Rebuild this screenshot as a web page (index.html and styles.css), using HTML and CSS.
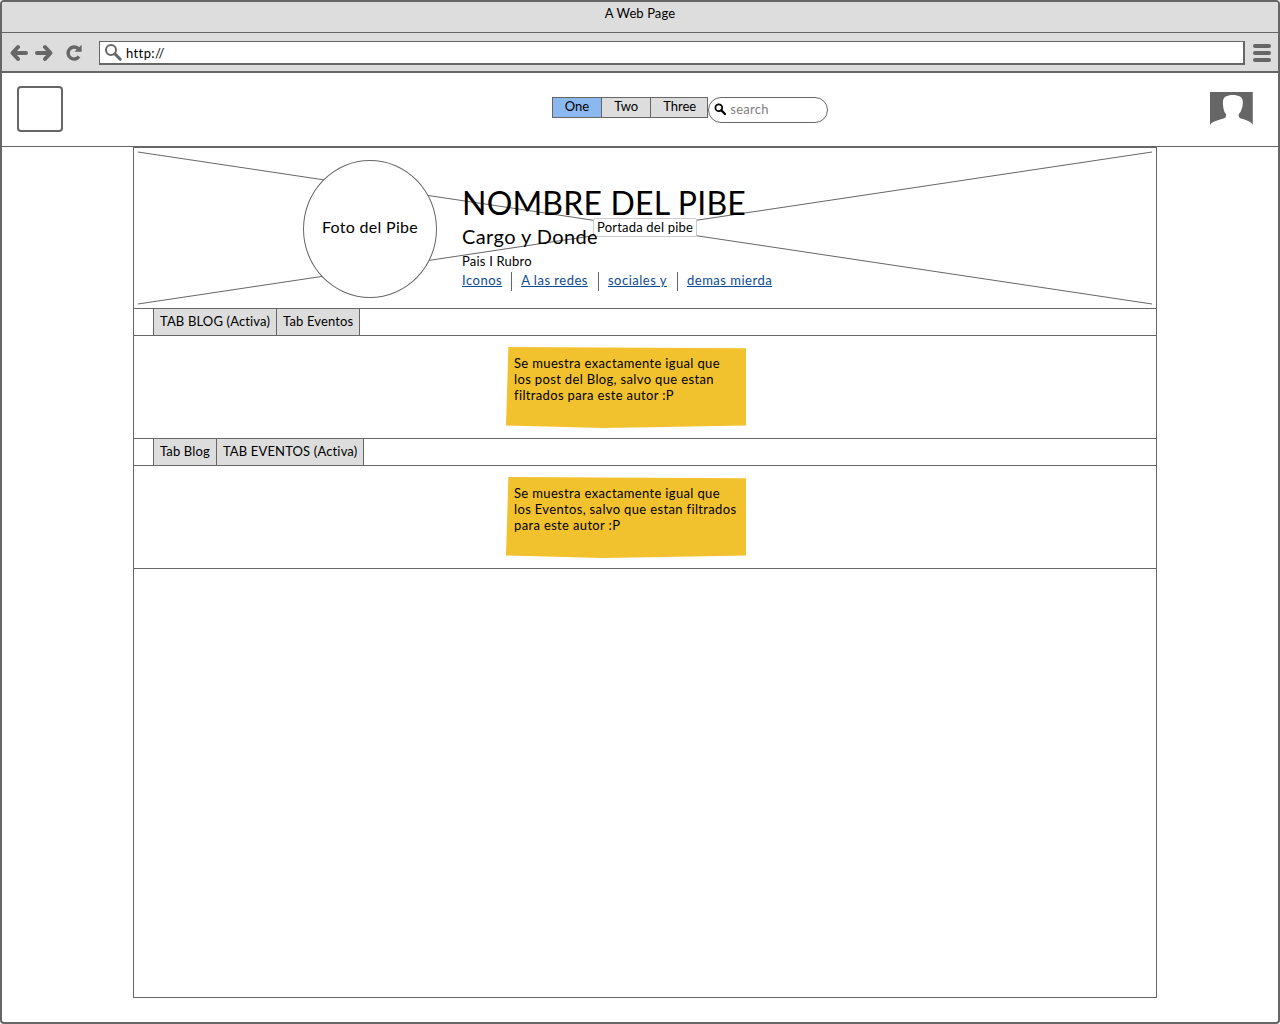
FILE: index.html
```html
<!DOCTYPE html>
<html lang="es">
<head>
    <meta charset="UTF-8">
    <meta name="viewport" content="width=device-width, initial-scale=1.0">
    <title>A Web Page</title>
    <link rel="stylesheet" href="styles.css">
</head>
<body>
    <div class="window">
        <div class="title-bar">A Web Page</div>
        <div class="tool-bar">
            <svg class="tool-icon" width="18" height="18" viewBox="0 0 18 18"><path d="M8 3 L2.500 9 L8 15 M3 9 H16" fill="none" stroke="#666" stroke-width="4" stroke-linejoin="round" stroke-linecap="round"/></svg>
            <svg class="tool-icon forward" width="18" height="18" viewBox="0 0 18 18"><path d="M10 3 L15.500 9 L10 15 M15 9 H2" fill="none" stroke="#666" stroke-width="4" stroke-linejoin="round" stroke-linecap="round"/></svg>
            <svg class="tool-icon reload" width="18" height="18" viewBox="0 0 18 18"><path d="M14 12.500 A6 6 0 1 1 13.200 4.600" fill="none" stroke="#666" stroke-width="3.400"/><path d="M9.500 7.800 H16.600 V0.800 Z" fill="#666"/></svg>
            <div class="address">
                <svg width="18" height="18" viewBox="0 0 18 18"><circle cx="7" cy="7" r="5" fill="none" stroke="#666" stroke-width="2"/><path d="M10.800 10.800 L16.200 16.200" stroke="#666" stroke-width="3" stroke-linecap="round"/></svg>
                <span>http://</span>
            </div>
            <div class="burger"><i></i><i></i><i></i></div>
        </div>
        <div class="site-header">
            <div class="logo"></div>
            <div class="site-nav">
                <div class="button-bar">
                    <span class="on">One</span>
                    <span>Two</span>
                    <span>Three</span>
                </div>
                <div class="search">
                    <svg width="12" height="12" viewBox="0 0 12 12"><circle cx="4.800" cy="4.800" r="3.400" fill="none" stroke="#000" stroke-width="1.700"/><path d="M7.400 7.400 L11 11" stroke="#000" stroke-width="2.200" stroke-linecap="round"/></svg>
                    <span>search</span>
                </div>
            </div>
            <svg class="avatar" width="43" height="34" viewBox="0 0 43 34"><path d="M0 0 H43 V33 C42 30 37 28 31 26.500 C29 26 28.500 24 29 22 C31.500 20 33 15 33 10 C33 5 29 3 23 3 C17 3 13 5 13 10 C13 15 14 20 16 22 C16.500 24 16 26 14 26.500 C8 28 1 30 0 33 Z" fill="#666"/></svg>
        </div>
        <div class="page">
            <div class="cover">
                <svg class="cover-lines" width="1022" height="160" viewBox="0 0 1022 160"><path d="M4 4 L1018 156 M4 156 L1018 4" stroke="#666" stroke-width="1" fill="none"/></svg>
                <span class="cover-label">Portada del pibe</span>
                <div class="photo">Foto del Pibe</div>
                <div class="profile">
                    <h1>NOMBRE DEL PIBE</h1>
                    <h2>Cargo y Donde</h2>
                    <p>Pais I Rubro</p>
                    <div class="links">
                        <a href="#">Iconos</a>
                        <a href="#">A las redes</a>
                        <a href="#">sociales y</a>
                        <a href="#">demas mierda</a>
                    </div>
                </div>
            </div>
            <div class="tabs">
                <span>TAB BLOG (Activa)</span>
                <span>Tab Eventos</span>
            </div>
            <div class="tab-body">
                <div class="note">Se muestra exactamente igual que<br>los post del Blog, salvo que estan<br>filtrados para este autor :P</div>
            </div>
            <div class="tabs">
                <span>Tab Blog</span>
                <span>TAB EVENTOS (Activa)</span>
            </div>
            <div class="tab-body last">
                <div class="note">Se muestra exactamente igual que<br>los Eventos, salvo que estan filtrados<br>para este autor :P</div>
            </div>
        </div>
    </div>
</body>
</html>
```
FILE: styles.css
```css
* {
    box-sizing: border-box;
}

body {
    margin: 0;
    font-family: Lato, "Open Sans", sans-serif;
    font-size: 13px;
    color: #000;
    background-color: #fff;
}

.window {
    height: 1024px;
    border: 2px solid #666;
    border-radius: 4px;
    display: flex;
    flex-direction: column;
    overflow: hidden;
}

.title-bar {
    height: 31px;
    padding-top: 3px;
    text-align: center;
    letter-spacing: 0.1px;
    background-color: #ddd;
    border-bottom: 1px solid #666;
}

.tool-bar {
    height: 40px;
    display: flex;
    align-items: center;
    padding: 1px 0 0 8px;
    background-color: #ddd;
    border-bottom: 2px solid #666;
}

.tool-icon {
    margin-right: 7px;
}

.forward {
    margin-right: 12px;
}

.reload {
    margin-right: 0;
}

.address {
    width: 1146px;
    height: 24px;
    margin-left: 16px;
    display: flex;
    align-items: center;
    gap: 4px;
    padding-left: 4px;
    letter-spacing: 0.4px;
    background-color: #fff;
    border: 2px solid #666;
    border-width: 1px 2px 2px 1px;
}

.address span {
    padding-top: 1px;
}

.burger {
    margin-left: 8px;
    display: flex;
    flex-direction: column;
    gap: 3px;
}

.burger i {
    display: block;
    width: 18px;
    height: 4px;
    border-radius: 2px;
    background-color: #666;
}

.site-header {
    height: 74px;
    display: flex;
    align-items: flex-start;
    padding: 13px 25px 0 15px;
    border-bottom: 1px solid #666;
}

.logo {
    width: 46px;
    height: 46px;
    border: 2px solid #666;
    border-radius: 4px;
}

.site-nav {
    margin-left: 489px;
    margin-top: 11px;
    display: flex;
    align-items: flex-start;
}

.button-bar {
    display: flex;
    height: 21px;
    border: 1px solid #666;
    background-color: #ddd;
}

.button-bar span {
    padding: 0 12px;
    line-height: 16px;
    border-left: 1px solid #666;
}

.button-bar span:first-child {
    border-left: 0;
}

.button-bar span:last-child {
    padding-right: 11px;
}

.button-bar .on {
    background-color: #8cb8f0;
}

.search {
    width: 120px;
    height: 26px;
    display: flex;
    align-items: center;
    gap: 4px;
    padding: 0 0 2px 5px;
    letter-spacing: 0.3px;
    border: 1px solid #666;
    border-radius: 13px;
    color: #808080;
}

.avatar {
    margin-left: 382px;
    margin-top: 6px;
}

.page {
    width: 1024px;
    height: 851px;
    margin-left: 131px;
    border: 1px solid #666;
}

.cover {
    position: relative;
    height: 160px;
    display: flex;
    padding: 12px 0 0 169px;
}

.cover-lines {
    position: absolute;
    left: 0;
    top: 0;
}

.cover-label {
    position: absolute;
    left: 459px;
    top: 70px;
    padding: 0 3px;
    line-height: 17px;
    letter-spacing: 0.2px;
    background-color: #fff;
    border: 1px solid #ccc;
    border-radius: 2px;
}

.photo {
    position: relative;
    width: 134px;
    height: 138px;
    display: flex;
    align-items: center;
    justify-content: center;
    padding-bottom: 5px;
    font-size: 16px;
    letter-spacing: 0.3px;
    background-color: #fff;
    border: 1px solid #666;
    border-radius: 50%;
}

.profile {
    position: relative;
    margin-left: 25px;
    padding-top: 27px;
}

.profile h1 {
    margin: 0;
    font-size: 32px;
    font-weight: 400;
    line-height: 32px;
    letter-spacing: 0.2px;
}

.profile h2 {
    margin: 4px 0 0;
    font-size: 20px;
    font-weight: 400;
    line-height: 26px;
    letter-spacing: 0.4px;
}

.profile p {
    margin: 4px 0 0;
    line-height: 16px;
    letter-spacing: 0.2px;
}

.links {
    display: flex;
    margin-top: 3px;
    letter-spacing: 0.5px;
}

.links a {
    padding: 0 10px 3px 9px;
    line-height: 16px;
    color: #0b4a94;
    border-left: 1px solid #666;
}

.links a:first-child {
    padding-left: 0;
    padding-right: 9px;
    border-left: 0;
}

.tabs {
    height: 28px;
    display: flex;
    padding-left: 19px;
    letter-spacing: 0.15px;
    border-top: 1px solid #666;
    border-bottom: 1px solid #666;
}

.tabs span {
    padding: 0 6px;
    line-height: 24px;
    background-color: #ddd;
    border-left: 1px solid #666;
}

.tabs span:last-child {
    border-right: 1px solid #666;
}

.tab-body {
    height: 102px;
    padding: 11px 0 0 372px;
}

.tab-body.last {
    height: 103px;
    border-bottom: 1px solid #666;
}

.note {
    width: 240px;
    height: 81px;
    padding: 8px;
    line-height: 16px;
    letter-spacing: 0.35px;
    white-space: nowrap;
    background-color: #f2c12e;
    clip-path: polygon(1% 0, 100% 1.500%, 100% 97%, 60% 99%, 40% 100%, 0 97%);
}
```
